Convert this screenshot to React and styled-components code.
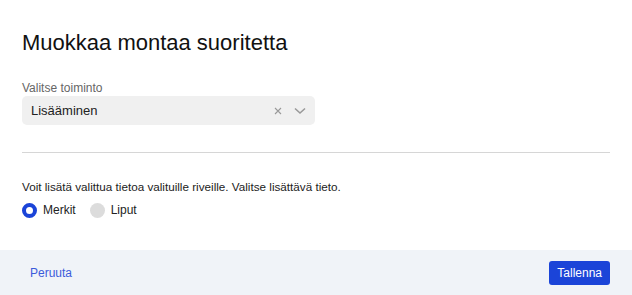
import React from "react";
import styled, { createGlobalStyle } from "styled-components";

const Global = createGlobalStyle`
  html, body { margin: 0; padding: 0; background: #fff; }
  body { font-family: "Liberation Sans", Arial, sans-serif; color: #222; }
`;

const Dialog = styled.div`
  width: 632px;
  height: 295px;
  display: flex;
  flex-direction: column;
  background: #fff;
`;

const Body = styled.div`
  flex: 1;
  padding: 30px 22px 0 22px;
`;

const Title = styled.h1`
  margin: 0;
  font-size: 22px;
  font-weight: 400;
  line-height: 26px;
  color: #111;
`;

const Label = styled.div`
  margin-top: 25px;
  font-size: 12px;
  line-height: 14px;
  color: #666;
`;

const SelectBox = styled.div`
  margin-top: 1px;
  width: 293px;
  height: 29px;
  box-sizing: border-box;
  border-radius: 5px;
  background: #f0f0f0;
  display: flex;
  align-items: center;
  padding: 0 9px;
  font-size: 13px;
  color: #222;
`;

const Value = styled.span`
  flex: 1;
`;

const Icons = styled.span`
  display: flex;
  align-items: center;
  gap: 12px;
`;

const Divider = styled.hr`
  margin: 27px 0 0 0;
  border: none;
  border-top: 1px solid #d6d6d6;
  width: 588px;
`;

const Info = styled.p`
  margin: 27px 0 0 0;
  font-size: 11.7px;
  line-height: 14px;
  color: #222;
`;

const Radios = styled.div`
  display: flex;
  gap: 14px;
  margin-top: 9px;
`;

const Radio = styled.label`
  display: flex;
  align-items: center;
  gap: 6px;
  font-size: 12px;
  line-height: 15px;
  color: #222;
`;

const Dot = styled.span`
  width: 15px;
  height: 15px;
  border-radius: 50%;
  box-sizing: border-box;
  background: ${(p) => (p.$on ? "#fff" : "#dcdcdc")};
  border: ${(p) => (p.$on ? "4px solid #1b44d8" : "none")};
`;

const Footer = styled.div`
  height: 45px;
  background: #f0f3f8;
  display: flex;
  align-items: center;
  justify-content: space-between;
  padding: 0 22px 0 30px;
`;

const Link = styled.span`
  font-size: 12px;
  color: #3b5bdb;
`;

const Button = styled.button`
  height: 24px;
  padding: 0 8px;
  border: none;
  border-radius: 3px;
  background: #1b44d8;
  color: #fff;
  font-family: "Liberation Sans", Arial, sans-serif;
  font-size: 12px;
`;

export default function App() {
  return (
    <Dialog>
      <Global />
      <Body>
        <Title>Muokkaa montaa suoritetta</Title>
        <Label>Valitse toiminto</Label>
        <SelectBox>
          <Value>Lisääminen</Value>
          <Icons>
            <svg width="8" height="8" viewBox="0 0 8 8">
              <path d="M1 1L7 7M7 1L1 7" stroke="#999" strokeWidth="1.1" />
            </svg>
            <svg width="12" height="8" viewBox="0 0 12 8">
              <path d="M1 1.5L6 6L11 1.5" stroke="#999" strokeWidth="1.6" fill="none" />
            </svg>
          </Icons>
        </SelectBox>
        <Divider />
        <Info>Voit lisätä valittua tietoa valituille riveille. Valitse lisättävä tieto.</Info>
        <Radios>
          <Radio><Dot $on />Merkit</Radio>
          <Radio><Dot />Liput</Radio>
        </Radios>
      </Body>
      <Footer>
        <Link>Peruuta</Link>
        <Button>Tallenna</Button>
      </Footer>
    </Dialog>
  );
}
